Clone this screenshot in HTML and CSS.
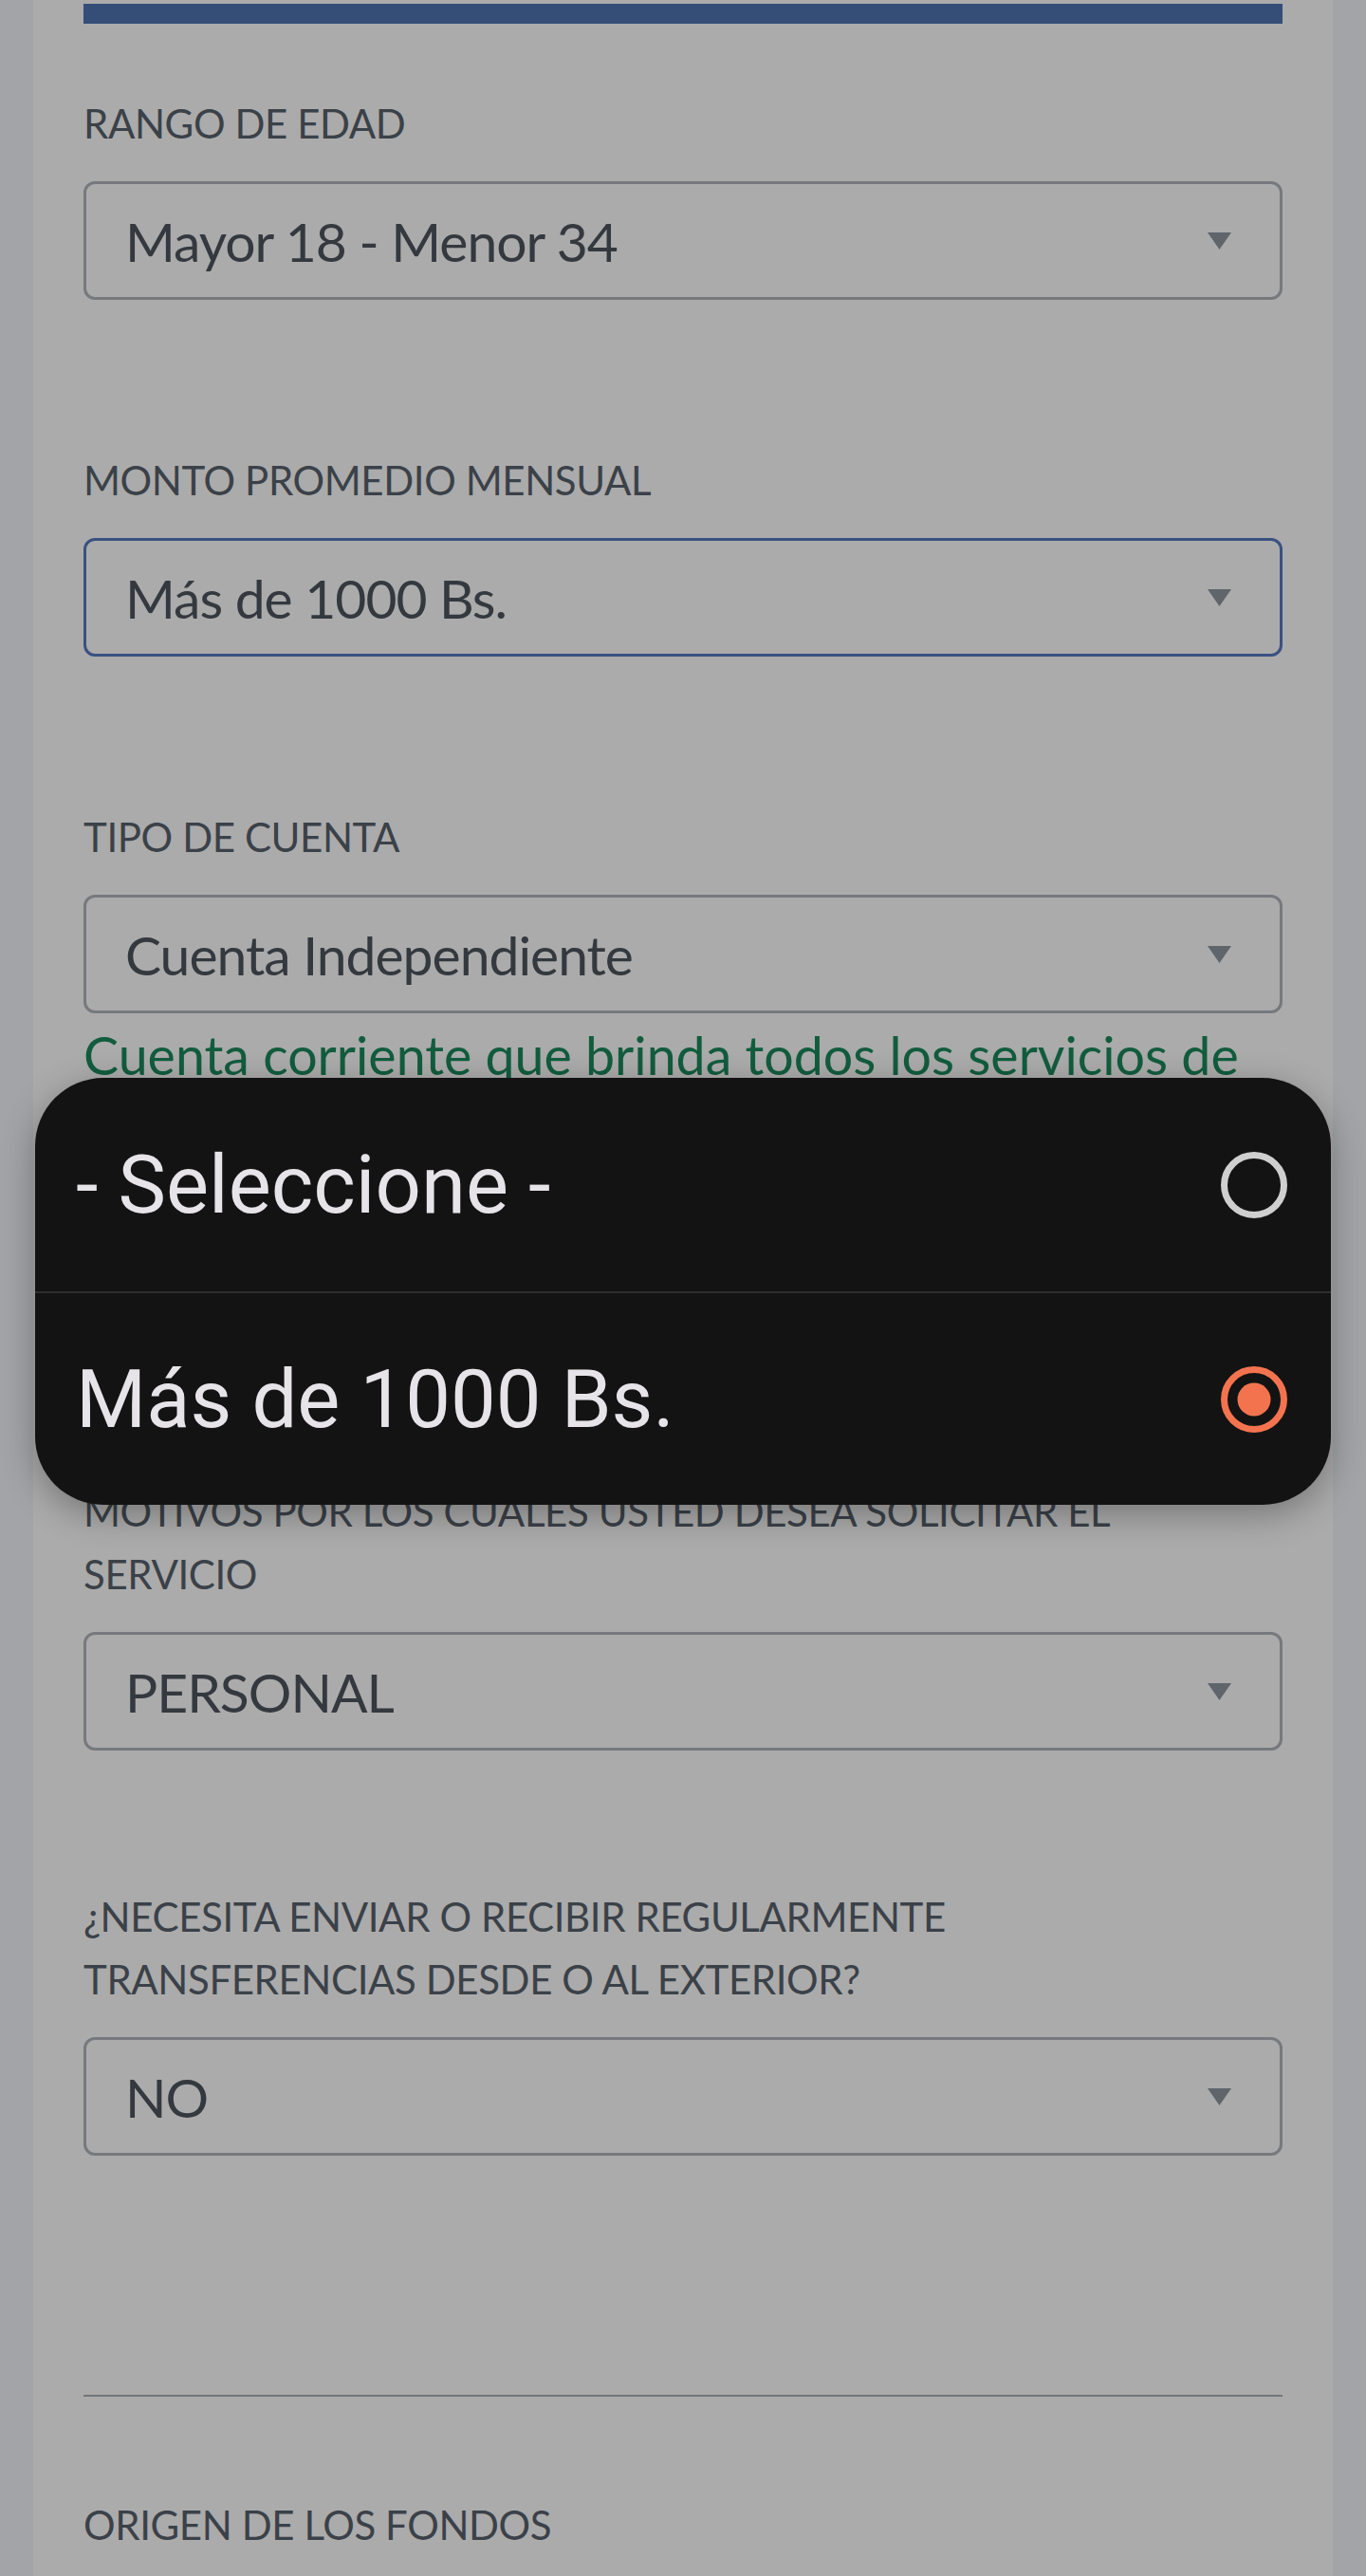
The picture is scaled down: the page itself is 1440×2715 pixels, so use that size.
FILE: index.html
```html
<!DOCTYPE html>
<html lang="es">
<head>
    <meta charset="UTF-8">
    <meta name="viewport" content="width=device-width, initial-scale=1.0">
    <title>Solicitud de cuenta</title>
    <link rel="stylesheet" href="styles.css">
</head>
<body>
    <!-- formulario (atenuado por el dialogo) -->
    <div class="page">
        <div class="top-bar"></div>

        <div class="field field-first">
            <label class="field-label">RANGO DE EDAD</label>
            <div class="select">
                <span>Mayor 18 - Menor 34</span>
                <svg class="caret" viewBox="0 0 25 18"><polygon points="0,0 25,0 12.5,18"/></svg>
            </div>
        </div>

        <div class="field">
            <label class="field-label">MONTO PROMEDIO MENSUAL</label>
            <div class="select focused">
                <span>Más de 1000 Bs.</span>
                <svg class="caret" viewBox="0 0 25 18"><polygon points="0,0 25,0 12.5,18"/></svg>
            </div>
        </div>

        <div class="field">
            <label class="field-label">TIPO DE CUENTA</label>
            <div class="select">
                <span>Cuenta Independiente</span>
                <svg class="caret" viewBox="0 0 25 18"><polygon points="0,0 25,0 12.5,18"/></svg>
            </div>
            <p class="hint">Cuenta corriente que brinda todos los servicios de</p>
        </div>

        <div class="field field-after-hint">
            <label class="field-label">MOTIVOS POR LOS CUALES USTED DESEA SOLICITAR EL SERVICIO</label>
            <div class="select">
                <span>PERSONAL</span>
                <svg class="caret" viewBox="0 0 25 18"><polygon points="0,0 25,0 12.5,18"/></svg>
            </div>
        </div>

        <div class="field field-tight">
            <label class="field-label">¿NECESITA ENVIAR O RECIBIR REGULARMENTE TRANSFERENCIAS DESDE O AL EXTERIOR?</label>
            <div class="select">
                <span>NO</span>
                <svg class="caret" viewBox="0 0 25 18"><polygon points="0,0 25,0 12.5,18"/></svg>
            </div>
        </div>

        <hr class="divider">

        <div class="field field-section">
            <label class="field-label">ORIGEN DE LOS FONDOS</label>
        </div>
    </div>

    <!-- dialogo de seleccion -->
    <div class="picker">
        <div class="picker-option">
            <span>- Seleccione -</span>
            <svg class="radio" viewBox="0 0 70 70"><circle cx="35" cy="35" r="31.5"/></svg>
        </div>
        <div class="picker-option">
            <span>Más de 1000 Bs.</span>
            <svg class="radio checked" viewBox="0 0 70 70"><circle cx="35" cy="35" r="31.5"/><circle class="dot" cx="35" cy="35" r="17.5"/></svg>
        </div>
    </div>
</body>
</html>
```

FILE: styles.css
```css
/* reset */
* {
    margin: 0;
    padding: 0;
    box-sizing: border-box;
}

body {
    background: #a3a4a8;
    font-family: Lato, "Open Sans", sans-serif;
    position: relative;
    overflow: hidden;
}

/* panel central */
.page {
    margin: 0 35px;
    min-height: 2715px;
    padding: 4px 53px 0;
    background: #ababab;
}

.top-bar {
    height: 21px;
    background: #344e77;
}

/* campos */
.field {
    margin-top: 157px;
}
.field-first {
    margin-top: 72px;
}
.field-after-hint {
    margin-top: 416px;
}
.field-tight {
    margin-top: 142px;
}
.field-section {
    margin-top: 102px;
}

.field-label {
    display: block;
    font-size: 42px;
    line-height: 66px;
    letter-spacing: -0.4px;
    color: #3b4148;
    margin-bottom: 28px;
}

.select {
    height: 125px;
    border: 3px solid #76797d;
    border-radius: 12px;
    display: flex;
    align-items: center;
    justify-content: space-between;
    padding: 0 51px 0 41px;
    font-size: 57px;
    letter-spacing: -1px;
    color: #34393f;
}
.select.focused {
    border-color: #3a5181;
}

.caret {
    width: 25px;
    height: 18px;
    fill: #5f656b;
}

.hint {
    margin-top: 12px;
    font-size: 55.5px;
    line-height: 64px;
    white-space: nowrap;
    color: #125c3e;
}

.divider {
    border: none;
    height: 2px;
    background: #72767a;
    margin-top: 252px;
}

/* dialogo */
.picker {
    position: absolute;
    top: 1136px;
    left: 37px;
    width: 1366px;
    background: #131313;
    border-radius: 72px;
    overflow: hidden;
    box-shadow: 0 10px 36px rgba(0, 0, 0, 0.3);
    font-family: Roboto, "Noto Sans", sans-serif;
}

.picker-option {
    height: 225px;
    display: flex;
    align-items: center;
    justify-content: space-between;
    padding: 0 46px 0 43px;
    font-size: 85px;
    color: #e6e4e9;
}
.picker-option + .picker-option {
    border-top: 2px solid #2d2d2d;
}

.radio {
    width: 70px;
    height: 70px;
    fill: none;
    stroke: #cfcfcf;
    stroke-width: 7;
}
.radio.checked {
    stroke: #f4734f;
}
.radio .dot {
    fill: #f4734f;
    stroke: none;
}
```
